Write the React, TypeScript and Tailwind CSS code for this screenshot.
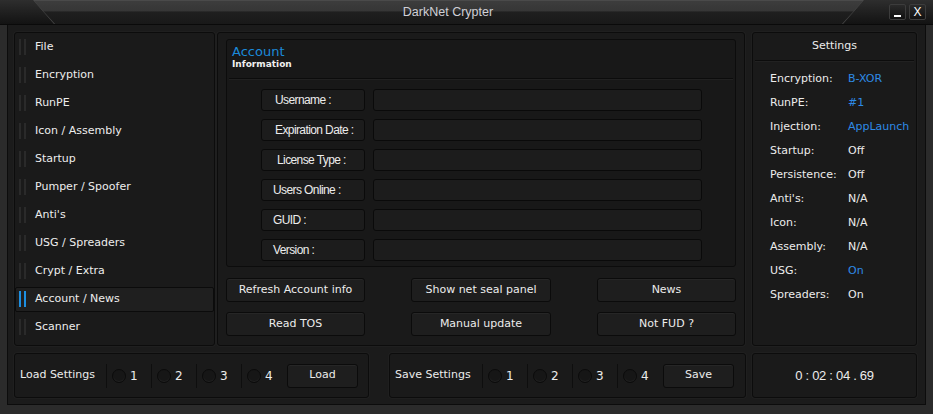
import type { ReactNode } from 'react';

const ui = "font-['DejaVu_Sans',Verdana,sans-serif]";
const arial = "font-['Liberation_Sans',Arial,sans-serif]";

const menu = [
  'File',
  'Encryption',
  'RunPE',
  'Icon / Assembly',
  'Startup',
  'Pumper / Spoofer',
  "Anti's",
  'USG / Spreaders',
  'Crypt / Extra',
  'Account / News',
  'Scanner',
];

const fields: [string, string][] = [
  ['Username :', 'pl-[13px]'],
  ['Expiration Date :', 'pl-[13px]'],
  ['License Type :', 'pl-[15px]'],
  ['Users Online :', 'pl-[11px]'],
  ['GUID :', 'pl-[11px]'],
  ['Version :', 'pl-[11px]'],
];

const settings: [string, string, boolean][] = [
  ['Encryption:', 'B-XOR', true],
  ['RunPE:', '#1', true],
  ['Injection:', 'AppLaunch', true],
  ['Startup:', 'Off', false],
  ['Persistence:', 'Off', false],
  ["Anti's:", 'N/A', false],
  ['Icon:', 'N/A', false],
  ['Assembly:', 'N/A', false],
  ['USG:', 'On', true],
  ['Spreaders:', 'On', false],
];

function Panel({ className, children }: { className?: string; children?: ReactNode }) {
  return (
    <div className={`rounded-[3px] border border-[#0c0c0c] bg-[#1a1a1a] shadow-[0_0_0_1px_#1f1f1f] ${className ?? ''}`}>
      {children}
    </div>
  );
}

function Btn({ children, className }: { children: ReactNode; className?: string }) {
  return (
    <div
      className={`flex items-center justify-center rounded-[3px] border border-[#0b0b0b] bg-[#1e1e1e] text-[11px] text-[#ececec] shadow-[inset_0_1px_0_#262626] ${ui} ${className ?? ''}`}
    >
      {children}
    </div>
  );
}

function MenuItem({ label, active }: { label: string; active?: boolean }) {
  const bar = active ? 'bg-[#1d8fe1]' : 'bg-[#2a2a2a]';
  return (
    <div className="flex h-[28px] items-center">
      <div
        className={`flex h-[25px] w-full items-center rounded-[2px] border pl-[3px] ${
          active ? 'border-[#0b0b0b] bg-[#1f1f1f]' : 'border-transparent'
        }`}
      >
        <div className={`h-[16px] w-[2px] ${bar}`} />
        <div className={`ml-[3px] h-[16px] w-[2px] ${bar}`} />
        <span className={`ml-[9px] text-[11px] text-[#ededed] ${ui}`}>{label}</span>
      </div>
    </div>
  );
}

function Slot({ n }: { n: number }) {
  return (
    <div className="flex h-full w-[45px] items-center">
      <div className="h-[24px] w-px bg-[#0e0e0e]" />
      <div className="ml-[5px] h-[14px] w-[14px] rounded-full border border-[#0b0b0b] bg-[#161616] shadow-[inset_0_-1px_0_#222]" />
      <span className={`ml-[4px] text-[12px] text-[#ececec] ${ui}`}>{n}</span>
    </div>
  );
}

function SlotPanel({ label, action, width, labelW }: { label: string; action: string; width: string; labelW: string }) {
  return (
    <Panel className={`flex h-[45px] items-center pl-[5px] ${width}`}>
      <span className={`${labelW} text-[11px] text-[#ececec] ${ui}`}>{label}</span>
      <div className="flex h-full items-center">
        {[1, 2, 3, 4].map((n) => (
          <Slot key={n} n={n} />
        ))}
      </div>
      <Btn className="ml-[1px] h-[24px] w-[71px]">{action}</Btn>
    </Panel>
  );
}

export default function App() {
  return (
    <div className="flex h-[414px] w-[933px] flex-col overflow-hidden bg-[#2b2b2b]">
      {/* title bar */}
      <div className="relative h-[25px] shrink-0 border-b border-[#0a0a0a] bg-gradient-to-b from-[#2e2e2e] to-[#131313]">
        <div className="absolute inset-0 bg-[#4a4a4a] [clip-path:polygon(33px_0,864px_0,843px_24px,54px_24px)]" />
        <div className="absolute inset-0 bg-[linear-gradient(#3d3d3d,#363636_45%,#1f1f1f_50%,#191919)] [clip-path:polygon(34px_1px,863px_1px,842px_24px,55px_24px)]" />
        <div className={`absolute left-0 top-0 flex h-[24px] w-[896px] items-center justify-center text-[12.5px] text-[#cfcfd6] ${arial}`}>
          DarkNet Crypter
        </div>
        <div className="absolute right-[7px] top-[4px] flex gap-[3px]">
          <div className={`flex h-[16px] w-[17px] items-end justify-center rounded-[2px] border border-[#3c3c3c] bg-gradient-to-b from-[#2a2a2a] to-[#111] pb-[2px] text-[11px] leading-none text-white ${arial}`}>
            <div className="h-[2px] w-[7px] bg-white" />
          </div>
          <div className={`flex h-[16px] w-[17px] items-center justify-center rounded-[2px] border border-[#3c3c3c] bg-gradient-to-b from-[#2a2a2a] to-[#111] text-[12px] leading-none text-white ${arial}`}>
            X
          </div>
        </div>
      </div>

      {/* body frame */}
      <div className="flex-1 px-[7px] pb-[9px]">
        <div className="flex h-full flex-col gap-[7px] border-x border-b border-[#0c0c0c] bg-[#1b1b1b] pl-[6px] pr-[8px] pt-[7px] pb-[6px]">
          <div className="flex h-[314px]">
            {/* sidebar */}
            <Panel className="h-full w-[201px]">
              {menu.map((m) => (
                <MenuItem key={m} label={m} active={m === 'Account / News'} />
              ))}
            </Panel>

            {/* center */}
            <Panel className="ml-[2px] h-full w-[528px] px-[8px] pt-[6px]">
              <div className="rounded-[3px] border border-[#0c0c0c] bg-[#181818] pb-[5px]">
                <div className={`px-[5px] pt-[4px] ${ui}`}>
                  <div className="text-[13px] leading-[15px] text-[#1b8ad8]">Account</div>
                  <div className="text-[9px] font-bold leading-[11px] text-[#f0f0f0]">Information</div>
                </div>
                <div className="mx-[2px] mt-[8px] h-px bg-[#0c0c0c] shadow-[0_1px_0_#212121]" />
                <div className="mt-[10px] flex flex-col gap-[8px] pl-[34px]">
                  {fields.map(([f, pad]) => (
                    <div key={f} className="flex h-[22px] gap-[8px]">
                      <div
                        className={`flex w-[104px] items-center rounded-[3px] border border-[#0a0a0a] bg-[#1c1c1c] text-[12px] tracking-[-0.6px] text-[#ececec] ${pad} ${arial}`}
                      >
                        {f}
                      </div>
                      <div className="w-[329px] rounded-[3px] border border-[#0a0a0a] bg-[#1c1c1c]" />
                    </div>
                  ))}
                </div>
              </div>
              <div className="mt-[11px] grid grid-cols-[139px_140px_139px] justify-between gap-y-[10px]">
                <Btn className="h-[24px]">Refresh Account info</Btn>
                <Btn className="h-[24px]">Show net seal panel</Btn>
                <Btn className="h-[24px]">News</Btn>
                <Btn className="h-[24px]">Read TOS</Btn>
                <Btn className="h-[24px]">Manual update</Btn>
                <Btn className="h-[24px]">Not FUD ?</Btn>
              </div>
            </Panel>

            {/* settings */}
            <Panel className={`ml-[7px] h-full w-[165px] pt-[6px] ${ui}`}>
              <div className="text-center text-[11px] leading-[14px] text-[#ececec]">Settings</div>
              <div className="mx-[2px] mt-[7px] h-px bg-[#0c0c0c] shadow-[0_1px_0_#212121]" />
              <div className="mt-[6px] pl-[17px]">
                {settings.map(([k, v, blue]) => (
                  <div key={k} className="flex h-[24px] items-center text-[11px]">
                    <span className="w-[78px] text-[#ececec]">{k}</span>
                    <span className={blue ? 'text-[#2e8ae6]' : 'text-[#ececec]'}>{v}</span>
                  </div>
                ))}
              </div>
            </Panel>
          </div>

          <div className="flex h-[45px]">
            <SlotPanel label="Load Settings" action="Load" width="w-[355px]" labelW="w-[86px]" />
            <div className="ml-[20px]">
              <SlotPanel label="Save Settings" action="Save" width="w-[357px]" labelW="w-[87px]" />
            </div>
            <Panel className="ml-[6px] flex h-[45px] w-[165px] items-center justify-center">
              <span className={`text-[13px] tracking-[-0.3px] text-[#ececec] ${arial}`}>0 : 02 : 04 . 69</span>
            </Panel>
          </div>
        </div>
      </div>
    </div>
  );
}
